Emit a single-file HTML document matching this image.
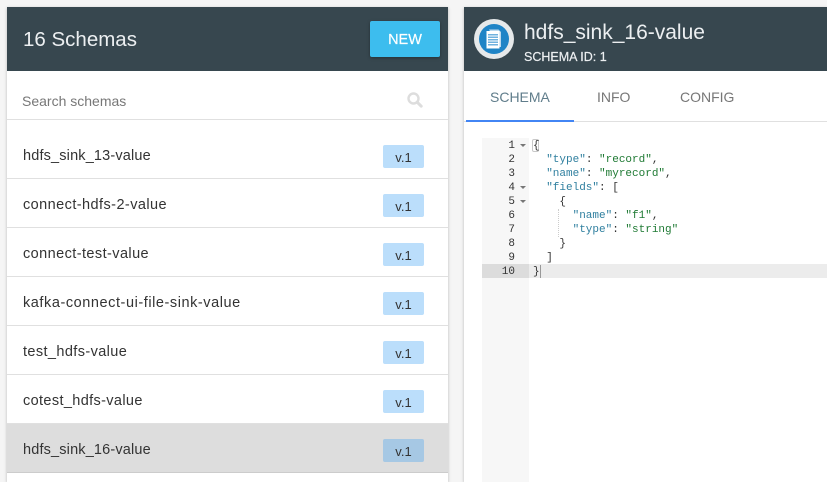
<!DOCTYPE html>
<html><head><meta charset="utf-8">
<style>
html,body{margin:0;padding:0;width:827px;height:482px;overflow:hidden;background:#f5f5f5;font-family:"Liberation Sans",sans-serif}
*{box-sizing:border-box}
#left{position:absolute;left:7px;top:7px;width:441px;height:475px;background:#fff;box-shadow:0 1px 3px rgba(0,0,0,.25)}
#right{position:absolute;left:464px;top:7px;width:363px;height:475px;background:#fff;box-shadow:0 1px 3px rgba(0,0,0,.25)}
.hd{position:absolute;left:0;top:0;right:0;height:64px;background:#37474f}
.t{position:absolute;white-space:nowrap}
.row{position:absolute;left:0;width:441px;height:49px;border-bottom:1px solid #e0e0e0}
.row .n{position:absolute;left:16px;top:16px;font-size:14.5px;line-height:20px;color:#333;white-space:nowrap}
.row .b{position:absolute;left:376px;top:15px;width:41px;height:23px;border-radius:2px;background:#bbdefb;color:#333;font-size:13px;line-height:25px;text-align:center}
.row.sel{background:#ddd;border-bottom:1px solid #ccc}
.row.sel .b{background:#a6c8e4}
.l{position:absolute;left:533px;font:11px/14px "Liberation Mono",monospace;white-space:pre;color:#333;height:14px}
.g{position:absolute;left:482px;width:33px;text-align:right;font:11px/14px "Liberation Mono",monospace;color:#333;height:14px}
.k{color:#2f7f9f}.s{color:#1f7a34}
.f{position:absolute;left:520px;width:0;height:0;border-left:3px solid transparent;border-right:3px solid transparent;border-top:3px solid #777}
</style></head><body>
<div id="left">
  <div class="hd"></div>
  <div class="t" style="left:16px;top:19px;font-size:20.5px;line-height:28px;color:#eceff1">16 Schemas</div>
  <div class="t" style="left:363px;top:14px;width:70px;height:36px;background:#3dbdee;border-radius:2px;box-shadow:0 1px 3px rgba(0,0,0,.35);color:#fff;font-size:14.5px;line-height:38px;text-align:center;-webkit-text-stroke:.2px #fff">NEW</div>
  <div class="t" style="left:15px;top:84px;font-size:14px;line-height:20px;color:#777">Search schemas</div>
  <svg style="position:absolute;left:399px;top:84px" width="18" height="18" viewBox="0 0 18 18"><circle cx="7.5" cy="7.5" r="5" fill="none" stroke="#ddd" stroke-width="2.4"/><path d="M11.2 11.2L15.2 15.2" stroke="#ddd" stroke-width="3" stroke-linecap="round"/></svg>
  <div style="position:absolute;left:0;top:112px;width:441px;height:1px;background:#e0e0e0"></div>
  <div class="row" style="top:123px"><span class="n" style="letter-spacing:.16px">hdfs_sink_13-value</span><span class="b">v.1</span></div>
  <div class="row" style="top:172px"><span class="n" style="letter-spacing:.43px">connect-hdfs-2-value</span><span class="b">v.1</span></div>
  <div class="row" style="top:221px"><span class="n" style="letter-spacing:.42px">connect-test-value</span><span class="b">v.1</span></div>
  <div class="row" style="top:270px"><span class="n" style="letter-spacing:.56px">kafka-connect-ui-file-sink-value</span><span class="b">v.1</span></div>
  <div class="row" style="top:319px"><span class="n" style="letter-spacing:.39px">test_hdfs-value</span><span class="b">v.1</span></div>
  <div class="row" style="top:368px"><span class="n" style="letter-spacing:.36px">cotest_hdfs-value</span><span class="b">v.1</span></div>
  <div class="row sel" style="top:417px"><span class="n" style="letter-spacing:.16px">hdfs_sink_16-value</span><span class="b">v.1</span></div>
</div>
<div id="right">
  <div class="hd"></div>
  <svg style="position:absolute;left:10px;top:12px" width="40" height="40" viewBox="0 0 40 40">
    <circle cx="20" cy="20" r="20" fill="#e6e9ea"/>
    <circle cx="20" cy="20" r="15" fill="#1f84c6"/>
    <path d="M15 10.500h9.500l2.500 2.500v15h-2z" fill="#bcd9ee"/>
    <rect x="12.500" y="12" width="13" height="17.500" fill="#fff"/>
    <rect x="14" y="15" width="10" height="1.500" fill="#6fb1de"/>
    <rect x="14" y="17.500" width="10" height="1.500" fill="#6fb1de"/>
    <rect x="14" y="20" width="10" height="1.500" fill="#6fb1de"/>
    <rect x="14" y="22.500" width="10" height="1.500" fill="#6fb1de"/>
    <rect x="14" y="25" width="10" height="1.500" fill="#6fb1de"/>
  </svg>
  <div class="t" style="left:60px;top:12px;font-size:21px;line-height:28px;color:#eceff1">hdfs_sink_16-value</div>
  <div class="t" style="left:60px;top:43px;font-size:12.5px;line-height:15px;color:#eceff1;-webkit-text-stroke:.2px #eceff1">SCHEMA ID: 1</div>
  <div class="t" style="left:26px;top:80px;font-size:14px;line-height:20px;color:#607d8b">SCHEMA</div>
  <div class="t" style="left:133px;top:80px;font-size:14px;line-height:20px;color:#777">INFO</div>
  <div class="t" style="left:216px;top:80px;font-size:14px;line-height:20px;color:#777">CONFIG</div>
  <div style="position:absolute;left:0;top:114px;width:363px;height:1px;background:#e0e0e0"></div>
  <div style="position:absolute;left:2px;top:113px;width:108px;height:2px;background:#4285f4"></div>
</div>
<div style="position:absolute;left:482px;top:138px;width:47px;height:344px;background:#f7f7f7"></div>
<div style="position:absolute;left:529px;top:264px;width:298px;height:14px;background:#ececec"></div>
<div style="position:absolute;left:482px;top:264px;width:47px;height:14px;background:#dcdcdc"></div>
<div style="position:absolute;left:532px;top:139px;width:7px;height:13px;border:1px solid #c8c8c8;border-radius:2px"></div>
<div style="position:absolute;left:558px;top:209px;width:0;height:28px;border-left:1px dotted #ccc"></div>
<div style="position:absolute;left:540px;top:265px;width:1px;height:13px;background:#999"></div>
<div class="g" style="top:139px">1</div><div class="f" style="top:144px"></div>
<div class="g" style="top:153px">2</div>
<div class="g" style="top:167px">3</div>
<div class="g" style="top:181px">4</div><div class="f" style="top:186px"></div>
<div class="g" style="top:195px">5</div><div class="f" style="top:200px"></div>
<div class="g" style="top:209px">6</div>
<div class="g" style="top:223px">7</div>
<div class="g" style="top:237px">8</div>
<div class="g" style="top:251px">9</div>
<div class="g" style="top:265px">10</div>
<div class="l" style="top:139px">{</div>
<div class="l" style="top:153px">  <span class="k">"type"</span>: <span class="s">"record"</span>,</div>
<div class="l" style="top:167px">  <span class="k">"name"</span>: <span class="s">"myrecord"</span>,</div>
<div class="l" style="top:181px">  <span class="k">"fields"</span>: [</div>
<div class="l" style="top:195px">    {</div>
<div class="l" style="top:209px">      <span class="k">"name"</span>: <span class="s">"f1"</span>,</div>
<div class="l" style="top:223px">      <span class="k">"type"</span>: <span class="s">"string"</span></div>
<div class="l" style="top:237px">    }</div>
<div class="l" style="top:251px">  ]</div>
<div class="l" style="top:265px">}</div>
</body></html>
